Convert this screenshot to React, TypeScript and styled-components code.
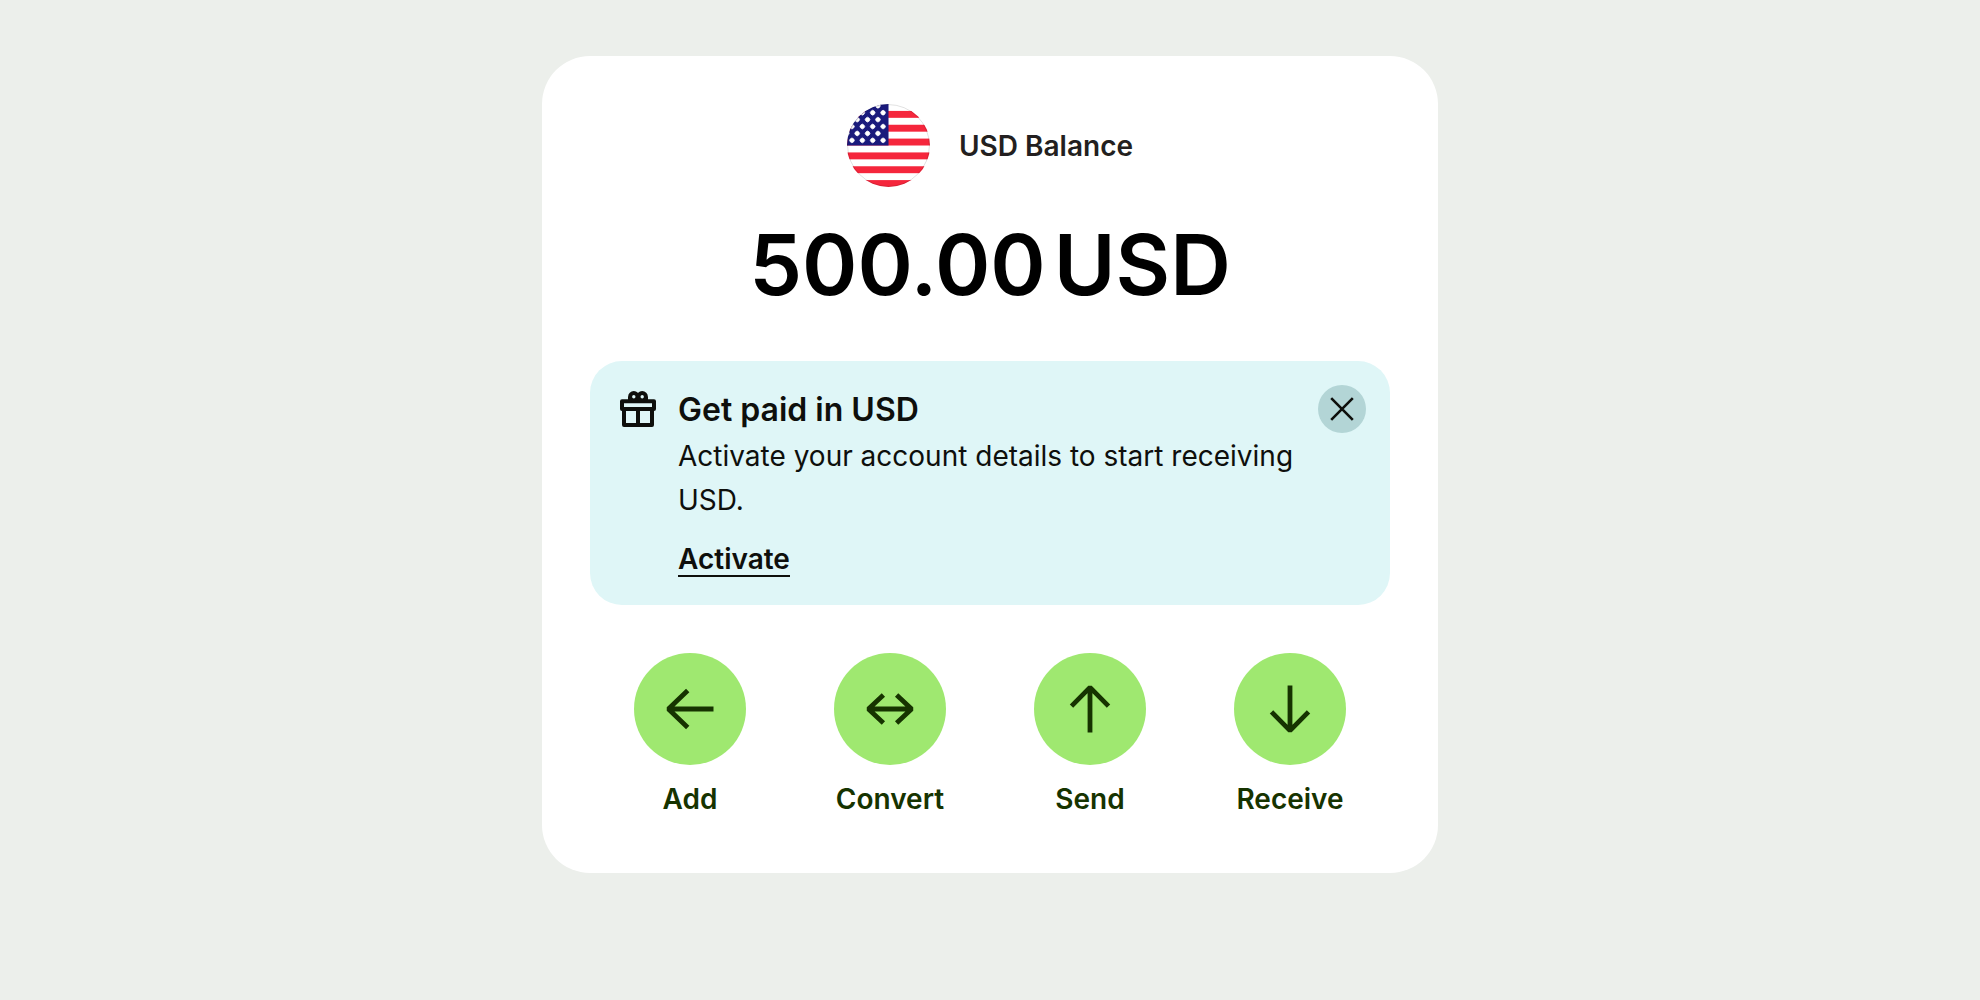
import React from "react";
import styled, { createGlobalStyle } from "styled-components";

const GlobalStyle = createGlobalStyle`
  *, *::before, *::after { box-sizing: border-box; }
  body {
    margin: 0;
    min-height: 100vh;
    background: #ecefeb;
    font-family: Inter, "Liberation Sans", sans-serif;
  }
  h1, h2, p { margin: 0; }
`;

const Page = styled.main`
  display: flex;
  justify-content: center;
  padding: 56px 24px;
`;

const Card = styled.section`
  display: flex;
  flex-direction: column;
  width: 100%;
  max-width: 896px;
  padding: 48px;
  border-radius: 48px;
  background: #fff;
`;

const Account = styled.header`
  display: flex;
  align-items: center;
  justify-content: center;
  gap: 28px;
`;

const AccountName = styled.h1`
  font-size: 28px;
  line-height: 40px;
  font-weight: 600;
  color: #231f20;
`;

const Amount = styled.p`
  display: flex;
  justify-content: center;
  gap: 8px;
  margin-top: 24px;
  font-size: 84px;
  line-height: 106px;
  font-weight: 600;
  color: #000;
`;

const Notice = styled.section`
  display: flex;
  align-items: flex-start;
  margin-top: 43px;
  padding: 24px 24px 28px;
  border-radius: 32px;
  background: #dff6f7;
  color: #0e0f0c;
`;

const NoticeBody = styled.div`
  display: flex;
  flex: 1;
  flex-direction: column;
  align-items: flex-start;
  padding-left: 16px;
`;

const NoticeTitle = styled.h2`
  font-size: 32px;
  line-height: 49px;
  font-weight: 600;
`;

const NoticeText = styled.p`
  font-size: 28px;
  line-height: 44px;
  font-weight: 400;
`;

const NoticeLink = styled.a`
  margin-top: 21px;
  border-bottom: 2px solid #0e0f0c;
  font-size: 28px;
  line-height: 32px;
  font-weight: 600;
  color: inherit;
  text-decoration: none;
`;

const CloseButton = styled.button`
  display: grid;
  place-items: center;
  width: 48px;
  height: 48px;
  padding: 0;
  border: 0;
  border-radius: 50%;
  background: #b3d5d6;
  color: #0e0f0c;
  cursor: pointer;
`;

const Actions = styled.nav`
  display: grid;
  grid-template-columns: repeat(4, 1fr);
  margin-top: 48px;
  padding-bottom: 4px;
`;

const ActionButton = styled.button`
  display: flex;
  flex-direction: column;
  align-items: center;
  gap: 12px;
  padding: 0;
  border: 0;
  background: none;
  color: #163300;
  font-family: inherit;
  font-size: 28px;
  line-height: 44px;
  font-weight: 600;
  cursor: pointer;
`;

const ActionCircle = styled.span`
  display: grid;
  place-items: center;
  width: 112px;
  height: 112px;
  border-radius: 50%;
  background: #9fe870;
`;

const rows = [0, 1, 2, 3, 4, 5];

function UsFlag() {
  return (
    <svg width="84" height="84" viewBox="0 0 85 85" aria-hidden="true">
      <clipPath id="disc"><circle cx="42" cy="42" r="42" /></clipPath>
      <g clipPath="url(#disc)">
        <rect width="84" height="84" fill="#fff" />
        {rows.map((row) => (
          <rect key={row} y={7 + row * 14} width="84" height="7" fill="#f5263c" />
        ))}
        <rect width="42" height="42" fill="#1a1a7c" />
        {rows.map((row) =>
          [0, 1, 2, 3].map((col) => (
            <path
              key={`${row}-${col}`}
              transform={`translate(${36.5 - col * 10.5 - (row % 2) * 5.2} ${36.8 - row * 7})`}
              d="M0-2.5L1.6-1.6L2.5 0L1.6 1.6L0 2.5L-1.6 1.6L-2.5 0L-1.6-1.6Z"
              fill="#fff"
              stroke="#fff"
              strokeWidth="0.7"
              strokeLinejoin="round"
            />
          ))
        )}
      </g>
      <circle cx="42" cy="42" r="41.4" fill="none" stroke="#000" strokeOpacity="0.12" />
    </svg>
  );
}

function GiftIcon() {
  return (
    <svg width="48" height="48" viewBox="0 0 48 48" fill="none" stroke="currentColor" strokeWidth="4" aria-hidden="true">
      <path d="M8 16.3H40V24H8ZM10 24V40H38V24M24 24V40" strokeLinejoin="round" />
      <path d="M16 16V11.8M32 16V11.8" />
      <circle cx="19.8" cy="11.8" r="3.7" />
      <circle cx="28.2" cy="11.8" r="3.7" />
    </svg>
  );
}

function CloseIcon() {
  return (
    <svg width="24" height="24" viewBox="0 0 24 24" stroke="currentColor" strokeWidth="2.6" aria-hidden="true">
      <path d="M1.2 1.2L22.8 22.8M22.8 1.2L1.2 22.8" />
    </svg>
  );
}

function ArrowIcon({ d }: { d: string }) {
  return (
    <svg width="48" height="48" viewBox="0 0 48 48" fill="none" stroke="currentColor" strokeWidth="4.8" aria-hidden="true">
      <path d={d} strokeLinejoin="bevel" />
    </svg>
  );
}

const actions = [
  { label: "Add", d: "M47.5 24H2.4M21.7 5.5L2.4 24L21.7 42.5" },
  { label: "Convert", d: "M2.4 24H45.6M17.4 10L2.4 24L17.4 38M30.6 10L45.6 24L30.6 38" },
  { label: "Send", d: "M24 47.5V2.4M5.5 21.1L24 2.4L42.5 21.1" },
  { label: "Receive", d: "M24 0.5V45.6M5.5 26.9L24 45.6L42.5 26.9" },
];

export default function App() {
  return (
    <>
      <GlobalStyle />
      <Page>
        <Card>
          <Account>
            <UsFlag />
            <AccountName>USD Balance</AccountName>
          </Account>
          <Amount>
            <span>500.00</span>
            <span>USD</span>
          </Amount>
          <Notice>
            <GiftIcon />
            <NoticeBody>
              <NoticeTitle>Get paid in USD</NoticeTitle>
              <NoticeText>Activate your account details to start receiving USD.</NoticeText>
              <NoticeLink href="#activate">Activate</NoticeLink>
            </NoticeBody>
            <CloseButton type="button" aria-label="Close">
              <CloseIcon />
            </CloseButton>
          </Notice>
          <Actions>
            {actions.map(({ label, d }) => (
              <ActionButton key={label} type="button">
                <ActionCircle>
                  <ArrowIcon d={d} />
                </ActionCircle>
                {label}
              </ActionButton>
            ))}
          </Actions>
        </Card>
      </Page>
    </>
  );
}
